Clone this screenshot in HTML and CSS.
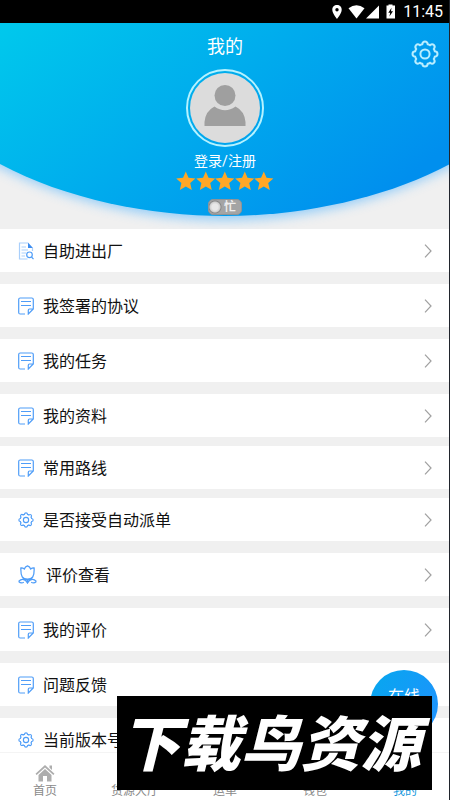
FILE: index.html
```html
<!DOCTYPE html>
<html lang="zh-CN">
<head>
<meta charset="utf-8">
<meta name="viewport" content="width=device-width, initial-scale=1">
<title>我的</title>
<link rel="stylesheet" href="styles.css">
</head>
<body>
<svg class="defs" aria-hidden="true">
  <symbol id="note" viewBox="0 0 16 18">
    <path d="M7 17H2.200Q.7 17 .7 15.500V2.500Q.7 1 2.200 1H13.800Q15.300 1 15.300 2.500V12L10.300 17V13.200Q10.300 12 11.500 12H15.300M3 4.500H13M3 8.500H13"/>
  </symbol>
  <symbol id="gear" viewBox="0 0 28 28">
    <path d="M11.300 4.200Q11.600 1.500 14 1.500T16.700 4.200Q17.900 4.500 19 5.200Q21.200 3.500 22.900 5.100T22.800 9Q23.500 10.100 23.800 11.300Q26.500 11.600 26.500 14T23.800 16.700Q23.500 17.900 22.800 19Q24.500 21.200 22.900 22.900T19 22.800Q17.900 23.500 16.700 23.800Q16.400 26.500 14 26.500T11.300 23.800Q10.100 23.500 9 22.800Q6.800 24.500 5.100 22.900T5.200 19Q4.500 17.900 4.200 16.700Q1.500 16.400 1.500 14T4.200 11.300Q4.500 10.100 5.200 9Q3.500 6.800 5.100 5.100T9 5.200Q10.100 4.500 11.300 4.200Z"/>
    <circle cx="14" cy="14" r="4.600"/>
  </symbol>
  <symbol id="chevron" viewBox="0 0 8 14"><path d="M1 .7L7 7L1 13.300"/></symbol>
  <symbol id="star" viewBox="0 0 20 20"><path d="M10 .3L12.800 6.700L19.800 7.400L14.500 12.100L16.100 19.200L10 15.500L3.900 19.200L5.500 12.100L.2 7.400L7.200 6.700Z"/></symbol>
</svg>
<div class="app">
  <div class="status">
    <svg class="status-icons" viewBox="0 0 66 16" aria-hidden="true">
      <path fill-rule="evenodd" d="M7 1C4.200 1 2.300 3.100 2.300 5.700C2.300 9.300 7 15 7 15S11.700 9.300 11.700 5.700C11.700 3.100 9.800 1 7 1ZM7 4A1.700 1.700 0 1 1 7 7.400A1.700 1.700 0 0 1 7 4Z"/>
      <path d="M18.500 4.200Q26.500 -1.800 34.500 4.200L26.500 14.500Z"/>
      <path d="M49 1.500V14.500H36Z"/>
      <path fill-rule="evenodd" d="M58.500 1.500V.5H62.500V1.500H65V14.500H56.500V1.500ZM61.500 3.800L58.300 8.800H60.200L59.400 12.500L63 7.300H61Z"/>
    </svg>
    <span class="clock">11:45</span>
  </div>

  <header class="hero">
    <svg class="hero-bg" viewBox="0 0 450 206" preserveAspectRatio="none" aria-hidden="true">
      <defs>
        <linearGradient id="sky" gradientUnits="userSpaceOnUse" x1="70" y1="-50" x2="300" y2="240">
          <stop offset="0" stop-color="#00c8ec"/><stop offset="1" stop-color="#008fee"/>
        </linearGradient>
        <filter id="glow" x="-10%" y="-10%" width="120%" height="130%"><feGaussianBlur stdDeviation="6"/></filter>
      </defs>
      <path d="M-30 0H480V128C400 175 310 197 225 197S50 175 -30 128Z" fill="#79c3fb" opacity=".8" filter="url(#glow)"/>
      <path d="M0 0H450V141C385 176 300 193 225 193S65 176 0 141Z" fill="url(#sky)"/>
    </svg>
    <h1 class="title">我的</h1>
    <button class="settings" type="button" aria-label="设置"><svg><use href="#gear"/></svg></button>
    <div class="avatar">
      <svg viewBox="0 0 70 70" aria-hidden="true"><circle cx="35" cy="22.500" r="10.500"/><path d="M14.500 53V49Q15.500 38 24.500 33.500Q35 41 45.500 33.500Q54.500 38 55.500 49V53Z"/></svg>
    </div>
    <a class="login" href="#login">登录/注册</a>
    <div class="stars" role="img" aria-label="五星">
      <svg><use href="#star"/></svg><svg><use href="#star"/></svg><svg><use href="#star"/></svg><svg><use href="#star"/></svg><svg><use href="#star"/></svg>
    </div>
    <label class="switch"><input type="checkbox" role="switch"><span>忙</span></label>
  </header>

  <main class="menu">
    <a class="row" href="#gate"><svg class="icon doc" viewBox="0 0 16 18" aria-hidden="true"><path class="pale" d="M10 1H1.500V17H9.500M14.500 6V9M3.500 5H8M3.500 8H10M3.500 11H8M3.500 14H7"/><path class="fold" d="M10 .5L15 6H10Z"/><circle cx="11.500" cy="12.800" r="2.800"/><path d="M13.500 15L15.500 17.200"/></svg><span>自助进出厂</span><svg class="chevron"><use href="#chevron"/></svg></a>
    <a class="row" href="#agreements"><svg class="icon"><use href="#note"/></svg><span>我签署的协议</span><svg class="chevron"><use href="#chevron"/></svg></a>
    <a class="row" href="#tasks"><svg class="icon"><use href="#note"/></svg><span>我的任务</span><svg class="chevron"><use href="#chevron"/></svg></a>
    <a class="row" href="#profile"><svg class="icon"><use href="#note"/></svg><span>我的资料</span><svg class="chevron"><use href="#chevron"/></svg></a>
    <a class="row tight" href="#routes"><svg class="icon"><use href="#note"/></svg><span>常用路线</span><svg class="chevron"><use href="#chevron"/></svg></a>
    <a class="row tight" href="#dispatch"><svg class="icon cog"><use href="#gear"/></svg><span>是否接受自动派单</span><svg class="chevron"><use href="#chevron"/></svg></a>
    <a class="row" href="#ratings"><svg class="icon tulip" viewBox="0 0 18 18" aria-hidden="true"><path d="M9 13.500Q5.500 13.500 4 11.200Q2.500 8.800 2.700 2.800Q4.500 2.600 6 3.800Q6.800 1.500 9 .8Q11.200 1.500 12 3.800Q13.500 2.600 15.300 2.800Q15.500 8.800 14 11.200Q12.500 13.500 9 13.500V17.300M.6 15.600Q2.500 13.500 4.600 13.600Q7.500 13.800 9 17Q10.500 13.800 13.400 13.600Q15.500 13.500 17.400 15.600M.6 15.600Q3 17.800 5.500 16.300M17.400 15.600Q15 17.800 12.500 16.300"/></svg><span>评价查看</span><svg class="chevron"><use href="#chevron"/></svg></a>
    <a class="row" href="#my-ratings"><svg class="icon"><use href="#note"/></svg><span>我的评价</span><svg class="chevron"><use href="#chevron"/></svg></a>
    <a class="row" href="#feedback"><svg class="icon"><use href="#note"/></svg><span>问题反馈</span><svg class="chevron"><use href="#chevron"/></svg></a>
    <a class="row" href="#version"><svg class="icon cog"><use href="#gear"/></svg><span>当前版本号</span></a>
  </main>
</div>

<button class="online" type="button">在线</button>

<nav class="tabs">
  <a href="#home"><svg viewBox="0 0 20 18" aria-hidden="true"><path d="M10 1L19.500 9.800L18.300 11L10 3.500L1.700 11L.5 9.800ZM14.500 1.500H17V6L14.500 3.700ZM10 5L16.500 11V17.500H12V12H8V17.500H3.500V11Z"/></svg>首页</a>
  <a href="#cargo">货源大厅</a>
  <a href="#waybill">运单</a>
  <a href="#wallet">钱包</a>
  <a class="active" href="#me">我的</a>
</nav>
<div class="banner">下载鸟资源</div>
</body>
</html>
```
FILE: styles.css
```css
* { box-sizing: border-box; }

body {
  margin: 0;
  height: 100vh;
  overflow: hidden;
  background: #f0f0f0;
  color: #111;
  font-family: Roboto, "Noto Sans CJK SC", sans-serif;
}

body::after {
  content: "";
  position: fixed;
  inset: 0 0 0 auto;
  width: 1px;
  background: #20242c;
}

a { color: inherit; text-decoration: none; }
button { border: 0; padding: 0; font: inherit; }
.defs { position: absolute; width: 0; height: 0; }

.status {
  display: flex;
  align-items: center;
  justify-content: flex-end;
  gap: 7px;
  height: 23px;
  padding-right: 7px;
  background: #000;
  color: #fff;
}
.status-icons { width: 66px; height: 16px; fill: #fff; }
.clock { font-size: 16px; line-height: 23px; }

.hero {
  position: relative;
  display: flex;
  flex-direction: column;
  align-items: center;
  height: 206px;
  padding-top: 10px;
  color: #fff;
}
.hero-bg {
  position: absolute;
  inset: 0;
  z-index: -1;
  width: 100%;
  height: 100%;
}
.title { margin: 0; font-size: 18px; font-weight: 400; line-height: 28px; }
.settings {
  position: absolute;
  top: 17px;
  right: 11px;
  width: 28px;
  height: 28px;
  background: none;
}
.settings svg {
  display: block;
  width: 28px;
  height: 28px;
  fill: none;
  stroke: #b8edff;
  stroke-width: 2;
}
.avatar {
  width: 78px;
  height: 78px;
  margin-top: 8px;
  padding: 2px;
  border: 2px solid #b5f2ff;
  border-radius: 50%;
}
.avatar svg {
  display: block;
  width: 70px;
  height: 70px;
  margin: auto;
  border-radius: 50%;
  background: #dcdcdc;
  fill: #9f9f9f;
}
.login { margin-top: 4px; font-size: 14px; line-height: 20px; }
.stars { display: flex; justify-content: space-between; width: 98px; }
.stars svg { width: 20px; height: 20px; fill: #ffa726; }

.switch {
  position: relative;
  width: 34px;
  height: 16px;
  margin-top: 8px;
  color: #eee;
  font-size: 12px;
  font-weight: 700;
  line-height: 16px;
}
.switch input {
  appearance: none;
  display: block;
  width: 100%;
  height: 100%;
  margin: 0;
  border: 1px solid #8d9499;
  border-radius: 5px;
  background: radial-gradient(circle at 6px 7px, #e8e8e8 0 3px, #cfcfcf 5px, #888 6px, transparent 7px), #a4a4a4;
}
.switch span { position: absolute; top: 0; left: 16px; }

.menu { display: flex; flex-direction: column; gap: 12px; }
.row {
  display: flex;
  align-items: center;
  flex: none;
  gap: 9px;
  height: 43px;
  padding: 0 18px;
  background: #fff;
  font-size: 16px;
}
.row span { padding-bottom: 2px; }
.row.tight { margin-top: -3px; }
.icon {
  width: 16px;
  height: 18px;
  fill: none;
  stroke: #4f9df8;
  stroke-width: 1.200;
}
.icon.cog { height: 16px; stroke-width: 2; }
.icon.tulip { width: 19px; height: 19px; }
.doc .pale { stroke: #a9cffb; }
.doc .fold { fill: #3e8df0; stroke: none; }
.chevron {
  width: 8px;
  height: 14px;
  margin-left: auto;
  fill: none;
  stroke: #a0a0a0;
  stroke-width: 1.200;
}

.online {
  position: fixed;
  right: 12px;
  bottom: 62px;
  width: 68px;
  height: 68px;
  padding-bottom: 18px;
  border-radius: 50%;
  background: linear-gradient(120deg, #06a8ee, #2090ff);
  color: #fff;
  font-size: 16px;
}

.tabs {
  position: fixed;
  inset: auto 0 0;
  display: flex;
  height: 48px;
  border-top: 1px solid #f4f4f4;
  background: #fff;
  color: #8a8a8a;
  font-size: 12px;
  line-height: 18px;
}
.tabs a {
  display: flex;
  flex: 1;
  flex-direction: column;
  align-items: center;
  justify-content: flex-end;
}
.tabs svg { width: 20px; height: 18px; fill: #adadad; }
.tabs .active { color: #1296db; }

.banner {
  position: fixed;
  right: 18px;
  bottom: 10px;
  width: 315px;
  height: 94px;
  padding-right: 8px;
  background: #000;
  color: #fff;
  font-family: "Noto Sans CJK SC", sans-serif;
  font-size: 60px;
  font-style: italic;
  font-weight: 900;
  line-height: 88px;
  text-align: center;
  white-space: nowrap;
}
```
